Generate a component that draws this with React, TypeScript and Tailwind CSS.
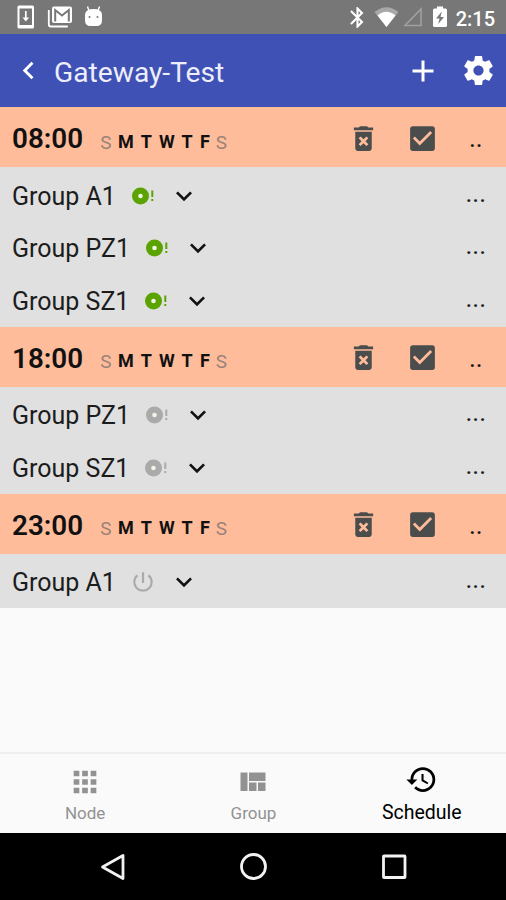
import type { ReactNode } from "react";
import {
  MdAdd,
  MdApps,
  MdBluetooth,
  MdCheckBox,
  MdHistory,
  MdKeyboardArrowDown,
  MdKeyboardArrowLeft,
  MdPowerSettingsNew,
} from "react-icons/md";

type GroupState = "on" | "dim" | "off";

const SCHEDULES: { time: string; groups: { name: string; state: GroupState }[] }[] = [
  {
    time: "08:00",
    groups: [
      { name: "Group A1", state: "on" },
      { name: "Group PZ1", state: "on" },
      { name: "Group SZ1", state: "on" },
    ],
  },
  {
    time: "18:00",
    groups: [
      { name: "Group PZ1", state: "dim" },
      { name: "Group SZ1", state: "dim" },
    ],
  },
  {
    time: "23:00",
    groups: [{ name: "Group A1", state: "off" }],
  },
];

const DAYS = [
  { label: "S", active: false, width: "w-[20px]" },
  { label: "M", active: true, width: "w-[20px]" },
  { label: "T", active: true, width: "w-[20.5px]" },
  { label: "W", active: true, width: "w-[20.5px]" },
  { label: "T", active: true, width: "w-[20px]" },
  { label: "F", active: true, width: "w-[16px]" },
  { label: "S", active: false, width: "w-[17px]" },
];

function StatusBar() {
  return (
    <div className="flex h-[34px] shrink-0 items-center bg-[#777777] text-white">
      {/* System update */}
      <svg className="ml-[17px]" width="18" height="24" viewBox="0 0 18 24">
        <rect x="0.5" y="0.5" width="16.5" height="23" rx="1.5" fill="#fff" />
        <rect x="2.5" y="3.5" width="12.5" height="16.5" fill="#777" />
        <path d="M8.8 6v8" stroke="#fff" strokeWidth="1.7" />
        <path d="M5.5 12.5h6.6l-3.3 4z" fill="#fff" />
      </svg>
      {/* Stacked mail */}
      <svg className="ml-[12px]" width="26" height="24" viewBox="0 0 26 24">
        <path d="M1.8 5v14.5q0 2 2 2h17" fill="none" stroke="#fff" strokeWidth="1.8" />
        <rect x="5" y="1.5" width="20" height="16.5" rx="2" fill="#fff" />
        <path d="M8.2 16.5V5l6.8 5.5L21.8 5v11.5" fill="none" stroke="#777" strokeWidth="2" />
      </svg>
      {/* Android head */}
      <svg className="ml-[11px] -mt-[2px]" width="19" height="22" viewBox="0 0 19 22">
        <path d="M5 6 3.5 1.5M14 6l1.5-4.5" stroke="#fff" strokeWidth="1.4" />
        <path d="M1 9.5Q1.5 4 9.5 4T18 9.5V15q0 6-5.5 6h-6Q1 21 1 15z" fill="#fff" />
        <circle cx="5.5" cy="12" r="1" fill="#777" />
        <circle cx="13.5" cy="12" r="1" fill="#777" />
      </svg>
      <div className="ml-auto flex items-center">
        <MdBluetooth size={25} />
        {/* Wifi */}
        <svg className="ml-[4px]" width="25" height="22" viewBox="0 0 25 22">
          <path d="M0.5 6Q12.5-3.5 24.5 6L12.5 21z" fill="#a8a8a8" />
          <path d="M3.5 9.5Q12.5 2 21.5 9.5L12.5 21z" fill="#fff" />
        </svg>
        {/* No signal */}
        <svg className="ml-[4px]" width="20" height="20" viewBox="0 0 20 20">
          <path d="M18 2v16.5H2z" fill="none" stroke="#a0a0a0" strokeWidth="1.6" />
        </svg>
        {/* Battery */}
        <svg className="ml-[9px]" width="16" height="22" viewBox="0 0 16 22">
          <path d="M5 0.5h6v2h2.5q1.500 0 1.500 1.500v15.500q0 1.500-1.500 1.500h-11Q1 21 1 19.500V4q0-1.500 1.500-1.500H5z" fill="#fff" />
          <path d="M9.8 5.500 4 12.500h3.500L6.200 18l5.800-7H8.500z" fill="#777" />
        </svg>
        <span className="ml-[8px] mr-[11px] pt-[3px] text-[20px] leading-none font-medium">2:15</span>
      </div>
    </div>
  );
}

function SettingsIcon() {
  return (
    <svg className="mr-[10px]" width="35" height="35" viewBox="0 0 24 24" fill="currentColor">
      <path d="M19.430 12.980c.040-.320.070-.640.070-.980s-.030-.660-.070-.980l2.110-1.650c.190-.150.240-.420.120-.640l-2-3.460c-.120-.220-.390-.300-.610-.220l-2.490 1c-.520-.400-1.080-.730-1.690-.980l-.380-2.650C14.460 2.180 14.250 2 14 2h-4c-.250 0-.460.180-.490.420l-.380 2.650c-.610.250-1.170.590-1.690.980l-2.490-1c-.230-.090-.490 0-.610.220l-2 3.460c-.130.220-.070.490.120.640l2.110 1.650c-.040.320-.070.650-.070.980s.030.660.070.980l-2.110 1.650c-.190.150-.240.420-.120.640l2 3.460c.120.220.390.300.610.220l2.490-1c.520.400 1.080.730 1.690.980l.380 2.650c.030.240.240.420.490.420h4c.250 0 .460-.180.490-.420l.380-2.650c.610-.250 1.170-.590 1.690-.980l2.490 1c.230.090.490 0 .610-.220l2-3.460c.120-.220.070-.490-.120-.640l-2.110-1.650zM12 15.500c-1.930 0-3.500-1.570-3.500-3.500s1.570-3.500 3.500-3.500 3.500 1.570 3.500 3.500-1.570 3.500-3.500 3.500z" />
    </svg>
  );
}

function Header() {
  return (
    <header className="flex h-[73px] shrink-0 items-center bg-[#3f51b5] text-white">
      <MdKeyboardArrowLeft className="ml-[11px] shrink-0" size={35} />
      <h1 className="ml-[8px] pt-[5px] text-[28.2px] leading-none text-[#eceefa]">Gateway-Test</h1>
      <MdAdd className="mr-[20px] ml-auto" size={36} />
      <SettingsIcon />
    </header>
  );
}

function TrashIcon() {
  return (
    <svg width="33" height="33" viewBox="0 0 24 24" fill="currentColor">
      <path d="M6 19c0 1.100.900 2 2 2h8c1.100 0 2-.900 2-2V7H6v12zm2.460-7.120l1.410-1.410L12 12.590l2.120-2.120 1.410 1.410L13.410 14l2.120 2.120-1.410 1.410L12 15.410l-2.120 2.120-1.410-1.410L10.590 14l-2.130-2.120zM15.500 4l-1-1h-5l-1 1H5v2h14V4z" />
    </svg>
  );
}

function ScheduleHeader({ time }: { time: string }) {
  return (
    <div className="flex h-[60px] items-center bg-[#ffbc9b] text-[#111]">
      <span className="ml-[12px] w-[84px] pt-[4px] text-[27.8px] leading-none font-semibold">{time}</span>
      <div className="flex pt-[10px] text-[18px] leading-none">
        {DAYS.map((day, i) => (
          <span
            key={i}
            className={`${day.width} text-center ${day.active ? "font-bold" : "text-[19px] text-[#9a8278]"}`}
          >
            {day.label}
          </span>
        ))}
      </div>
      <div className="ml-auto flex items-center pt-[2px] text-[#4b4d4d]">
        <TrashIcon />
        <MdCheckBox className="ml-[26px]" size={33} />
        <span className="ml-[30px] w-[37px] text-[26px] leading-none text-[#111]">..</span>
      </div>
    </div>
  );
}

function StateIcon({ state }: { state: GroupState }) {
  if (state === "off") {
    return <MdPowerSettingsNew className="text-[#aaaaaa]" size={26} />;
  }
  return (
    <svg
      className={state === "on" ? "text-[#5ba300]" : "text-[#aaaaaa]"}
      width="26"
      height="20"
      viewBox="0 0 26 20"
      fill="currentColor"
    >
      <circle cx="10.5" cy="10" r="8.5" />
      <circle cx="10.5" cy="10" r="2.3" fill="#f0f5e8" />
      <path d="M21.3 4.500h2v6.500h-2zM21.300 13h2v2h-2z" />
    </svg>
  );
}

function GroupRow({ name, state }: { name: string; state: GroupState }) {
  return (
    <div className="flex h-[52.5px] items-center text-[#1c1c1c]">
      <span className="ml-[12px] pt-[4px] text-[25px] leading-none">{name}</span>
      <div className="ml-[14px] flex items-center pt-[3px]">
        <StateIcon state={state} />
        <MdKeyboardArrowDown className="ml-[12px] text-[#111]" size={32} />
      </div>
      <span className="-mt-[3px] ml-auto w-[40.5px] text-[26px] leading-none">...</span>
    </div>
  );
}

function QuiltIcon() {
  return (
    <svg width="26" height="20" viewBox="0 0 26 20" fill="currentColor">
      <path d="M0.5 0.5h7v18.5h-7zM9 0.5h16.5v8.5H9zM9 10.5h7.5V19H9zM18 10.5h7.5V19H18z" />
    </svg>
  );
}

function Tab({ icon, label, active = false }: { icon: ReactNode; label: string; active?: boolean }) {
  return (
    <div className={`flex flex-1 flex-col items-center ${active ? "text-black" : "text-[#929292]"}`}>
      <div className={`flex items-center justify-center ${active ? "h-[50px]" : "h-[55px]"}`}>{icon}</div>
      <span className={active ? "text-[19.5px] leading-[17px]" : "text-[17px] leading-[9px]"}>{label}</span>
    </div>
  );
}

export default function App() {
  return (
    <div className="flex h-[900px] w-[506px] flex-col overflow-hidden bg-[#fafafa] font-['Roboto',sans-serif]">
      <StatusBar />
      <Header />
      <main className="flex-1 bg-[#fafafa]">
        {SCHEDULES.map((schedule) => (
          <section key={schedule.time}>
            <ScheduleHeader time={schedule.time} />
            <div className="bg-[#e0e0e0] py-px">
              {schedule.groups.map((group) => (
                <GroupRow key={group.name} {...group} />
              ))}
            </div>
          </section>
        ))}
      </main>
      <nav className="flex h-[81px] shrink-0 border-t-2 border-[#efefef] pl-px">
        <Tab icon={<MdApps size={34} />} label="Node" />
        <Tab icon={<QuiltIcon />} label="Group" />
        <Tab icon={<MdHistory size={33} />} label="Schedule" active />
      </nav>
      {/* System navigation */}
      <div className="flex h-[67px] shrink-0 items-center justify-center gap-[114px] bg-black">
        <svg width="26" height="28" viewBox="0 0 26 28" fill="none" stroke="#f2f2f2" strokeWidth="2.8">
          <path d="M24 2.5v23L3.5 14z" strokeLinejoin="round" />
        </svg>
        <svg width="28" height="28" viewBox="0 0 28 28" fill="none" stroke="#f2f2f2" strokeWidth="2.8">
          <circle cx="14.5" cy="13.5" r="12" />
        </svg>
        <svg width="26" height="28" viewBox="0 0 26 28" fill="none" stroke="#f2f2f2" strokeWidth="2.8">
          <rect x="2.5" y="3" width="21.5" height="21.5" rx="0.5" />
        </svg>
      </div>
    </div>
  );
}
